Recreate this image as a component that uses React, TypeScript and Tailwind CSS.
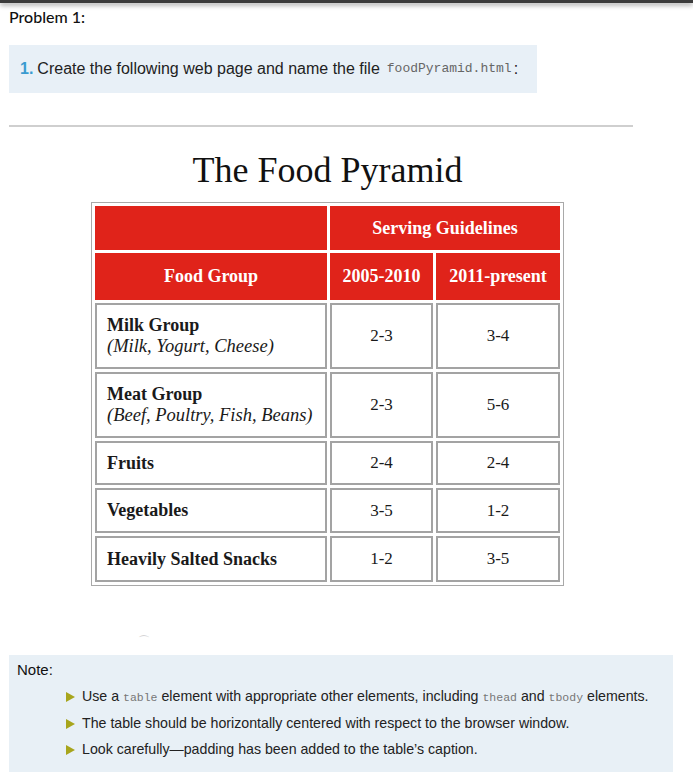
const rows = [
  { name: "Milk Group", sub: "(Milk, Yogurt, Cheese)", a: "2-3", b: "3-4", h: "h-[66px]" },
  { name: "Meat Group", sub: "(Beef, Poultry, Fish, Beans)", a: "2-3", b: "5-6", h: "h-[66px]" },
  { name: "Fruits", a: "2-4", b: "2-4", h: "h-[44px]" },
  { name: "Vegetables", a: "3-5", b: "1-2", h: "h-[45px]" },
  { name: "Heavily Salted Snacks", a: "1-2", b: "3-5", h: "h-[46px]" },
];

const notes = [
  <>
    Use a <code className="font-['Liberation_Mono'] text-[11.5px] text-[#777]">table</code> element with
    appropriate other elements, including{" "}
    <code className="font-['Liberation_Mono'] text-[11.5px] text-[#777]">thead</code> and{" "}
    <code className="font-['Liberation_Mono'] text-[11.5px] text-[#777]">tbody</code> elements.
  </>,
  <>The table should be horizontally centered with respect to the browser window.</>,
  <>Look carefully—padding has been added to the table’s caption.</>,
];

function Triangle() {
  return (
    <svg width="9" height="10" viewBox="0 0 9 10" className="shrink-0">
      <path d="M0 0 L9 5 L0 10 Z" fill="#a7a51c" />
    </svg>
  );
}

export default function App() {
  return (
    <div className="w-[693px] h-[779px] bg-white overflow-hidden font-['Liberation_Sans',Arial,sans-serif] text-[#222]">
      <div className="h-[3px] bg-[#3b3b3b] shadow-[0_2px_5px_rgba(0,0,0,0.45)]" />

      <div className="px-[9px]">
        <p className="pt-[4px] text-[16px] leading-[20px] font-['Lato',sans-serif] font-medium text-[#111]">Problem 1:</p>

        <div className="mt-[18px] w-[528px] h-[48px] bg-[#e8f0f7] flex items-center pl-[11px] text-[16px]">
          <span className="font-bold text-[#3a9bd0] mr-[4px]">1.</span>
          Create the following web page and name the file
          <code className="ml-[7px] font-['Liberation_Mono'] text-[13px] text-[#666]">foodPyramid.html</code>
          <span className="ml-[2px]">:</span>
        </div>

        <hr className="mt-[32px] w-[624px] border-0 h-[2px] bg-[#cfcfcf]" />

        <div className="w-[637px] flex flex-col items-center font-['Liberation_Serif','Times_New_Roman',serif]">
          <table className="border-separate border-spacing-[3px] border border-[#a9a9a9]">
            <caption className="text-[36px] leading-[41px] text-[#111] pt-[23px] pb-[11px]">The Food Pyramid</caption>
            <thead className="text-white text-[18px] font-bold">
              <tr className="h-[44px]">
                <th className="w-[232px] bg-[#e0231a] border border-[#e0231a]" />
                <th colSpan={2} className="bg-[#e0231a] border border-[#e0231a]">Serving Guidelines</th>
              </tr>
              <tr className="h-[47px]">
                <th className="bg-[#e0231a] border border-[#e0231a]">Food Group</th>
                <th className="w-[103px] bg-[#e0231a] border border-[#e0231a] px-0">2005-2010</th>
                <th className="w-[124px] bg-[#e0231a] border border-[#e0231a] px-0">2011-present</th>
              </tr>
            </thead>
            <tbody className="text-[17px] text-[#1a1a1a]">
              {rows.map((r) => (
                <tr key={r.name} className={r.h}>
                  <td className="border-2 border-[#a3a3a3] pl-[10px] text-[18px] leading-[21px]">
                    <div className="font-bold">{r.name}</div>
                    {r.sub && <div className="italic text-[18.5px]">{r.sub}</div>}
                  </td>
                  <td className="border-2 border-[#a3a3a3] text-center">{r.a}</td>
                  <td className="border-2 border-[#a3a3a3] text-center">{r.b}</td>
                </tr>
              ))}
            </tbody>
          </table>
        </div>

        <div className="h-[69px] flex items-end pl-[129px]">
          <span className="text-[12px] text-[#ccc] leading-[12px] mb-[8px]">⌒</span>
        </div>

        <div className="w-[664px] h-[117px] bg-[#e8f0f6] pt-[5px] pl-[8px]">
          <p className="text-[15px] leading-[20px] text-[#111]">Note:</p>
          <ul className="mt-[6px] pl-[49px] flex flex-col gap-[5px] text-[14.2px] leading-[21px]">
            {notes.map((n, i) => (
              <li key={i} className="flex items-center gap-[7px]">
                <Triangle />
                <span>{n}</span>
              </li>
            ))}
          </ul>
        </div>
      </div>
    </div>
  );
}
